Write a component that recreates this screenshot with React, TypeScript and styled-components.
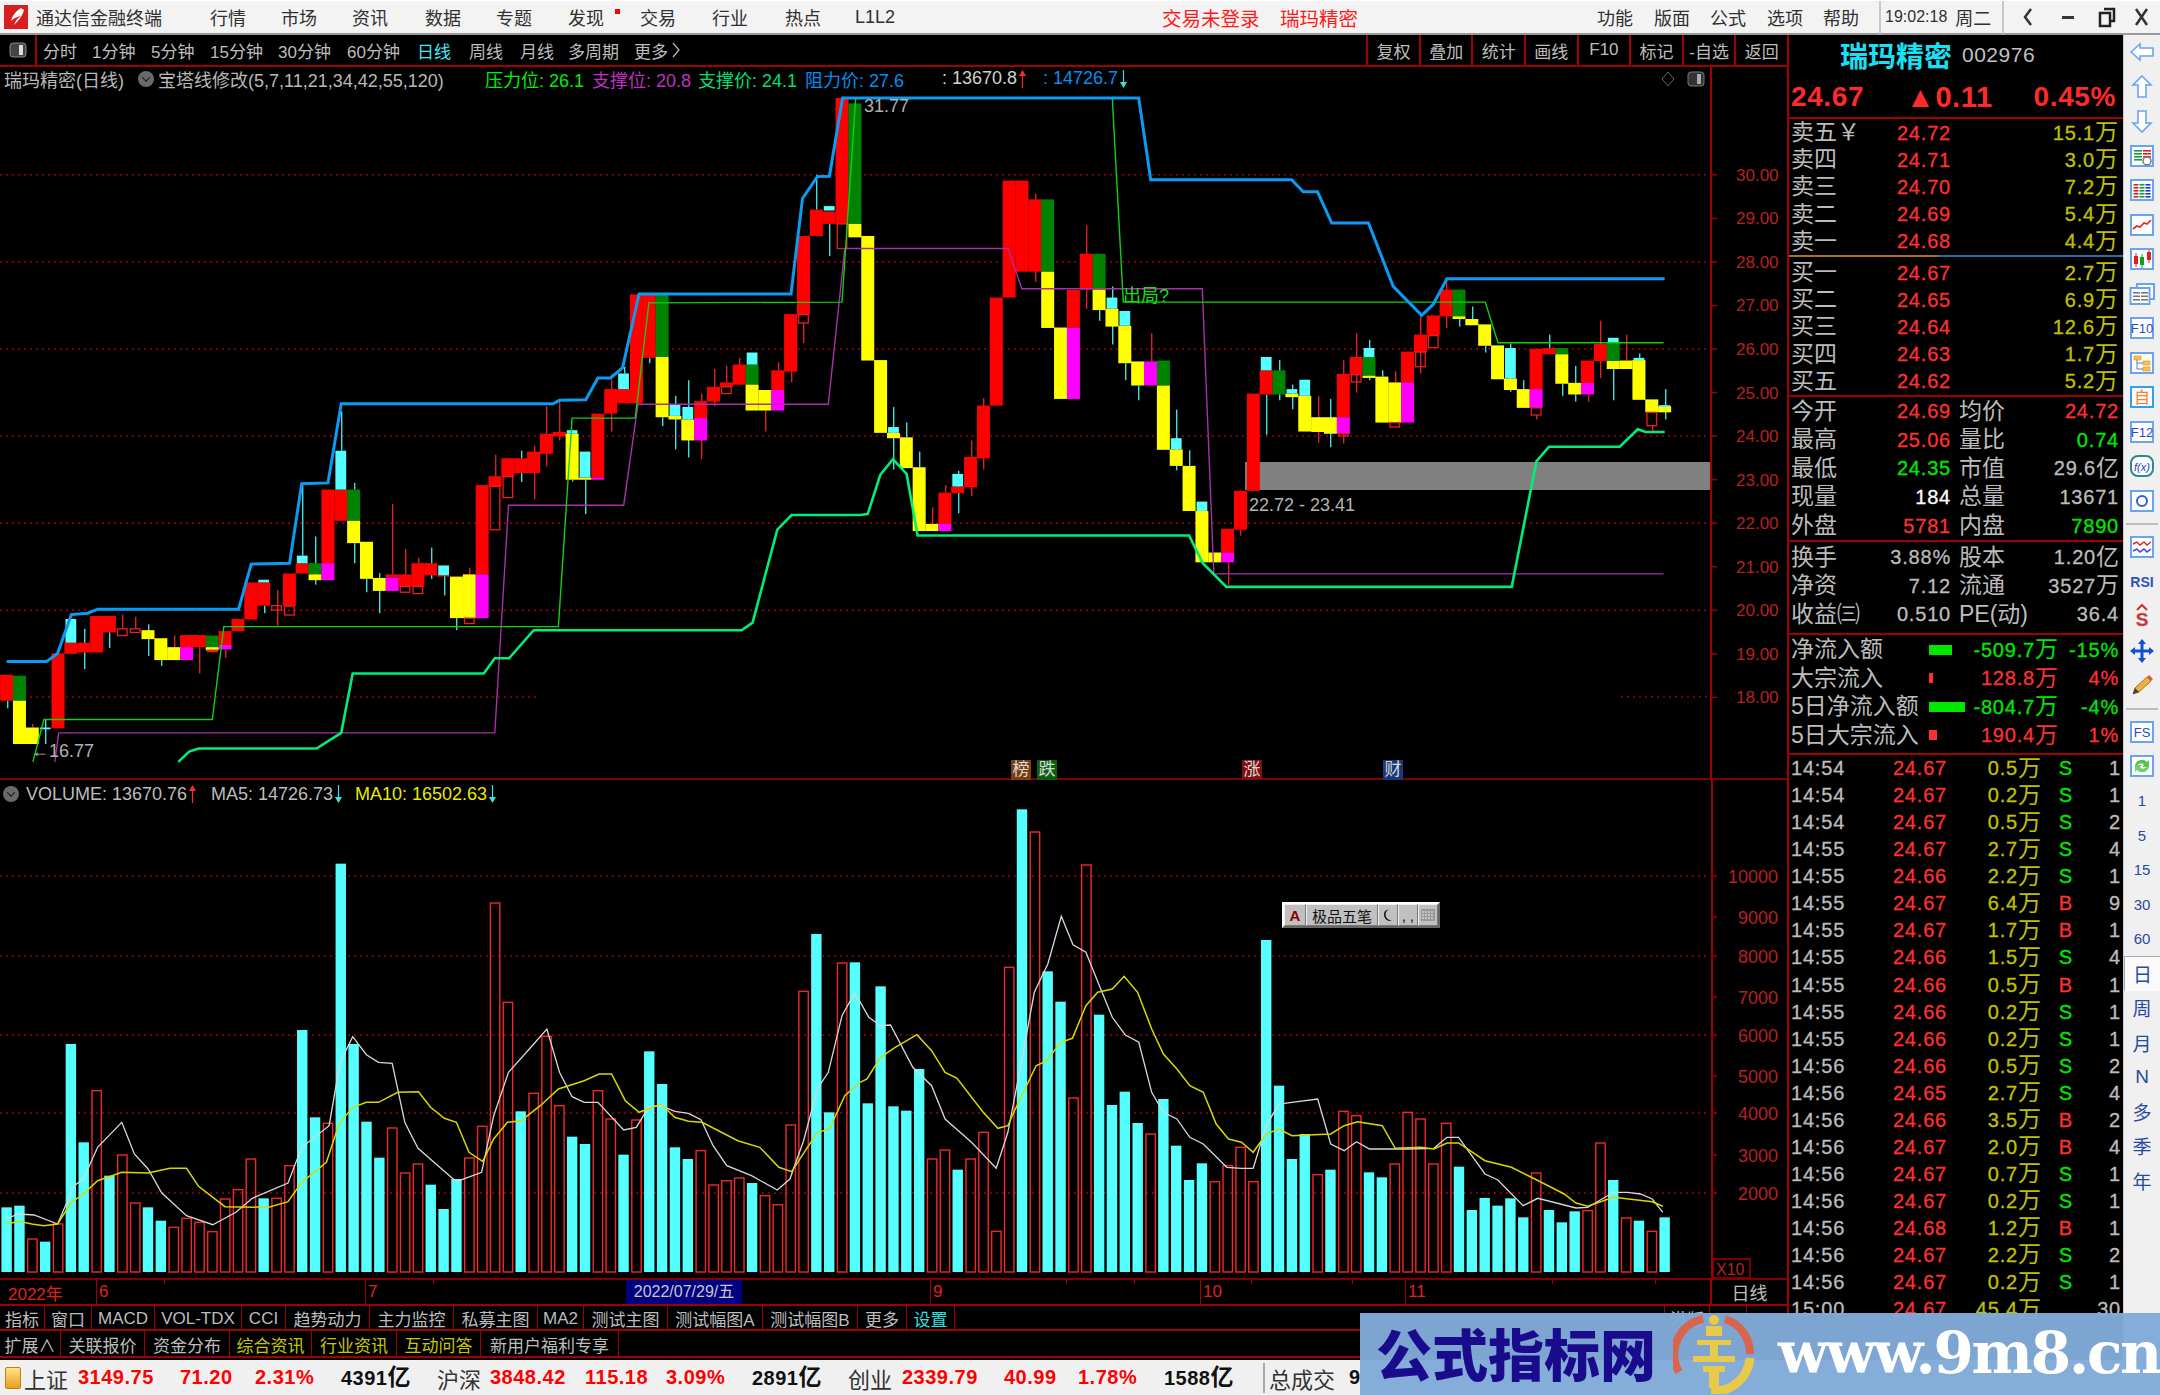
import React from "react";
import styled, { createGlobalStyle } from "styled-components";

const FONT = `"Liberation Sans","Noto Sans CJK SC",sans-serif`;
const LINE = "#a00000";

const Global = createGlobalStyle`
  html,body{margin:0;padding:0;background:#000;overflow:hidden;}
  *{box-sizing:border-box;}
  #root{width:2160px;height:1395px;}
`;

const Page = styled.div`
  width:2160px;height:1395px;position:relative;overflow:hidden;background:#000;
  font-family:${FONT};display:flex;flex-direction:column;
`;
const TitleBar = styled.div`
  height:35px;background:#f3f3f3;border-bottom:2px solid #9a9a9a;border-top:1px solid #fff;
  display:flex;align-items:center;font-size:18px;color:#303030;flex:none;
`;
const Logo = styled.svg`width:24px;height:24px;margin-left:4px;flex:none;`;
const AppName = styled.span`margin-left:8px;width:174px;white-space:nowrap;`;
const MenuItem = styled.span<{ $w: number }>`width:${(p) => p.$w}px;white-space:nowrap;position:relative;flex:none;`;
const RedDot = styled.i`position:absolute;left:47px;top:5px;width:5px;height:5px;background:#f00;`;
const Alert = styled.span<{ $w: number }>`color:#ff1a1a;width:${(p) => p.$w}px;flex:none;white-space:nowrap;font-size:19.5px;`;
const Clock = styled.span`
  border-left:2px solid #c8c8c8;border-right:2px solid #c8c8c8;height:33px;width:125px;margin-left:4px;
  display:flex;align-items:center;padding-left:4px;font-size:16px;gap:8px;white-space:nowrap;flex:none;
`;
const ClockDay = styled.span`font-size:18px;`;
const WinIcons = styled.svg`width:154px;height:30px;flex:none;`;

const Body = styled.div`display:flex;flex:none;height:1325px;`;
const ChartColumn = styled.div`width:1789px;border-right:2px solid ${LINE};display:flex;flex-direction:column;flex:none;`;
const ToolStrip = styled.div`
  height:32px;border-bottom:2px solid ${LINE};display:flex;align-items:center;color:#bdbdbd;font-size:17px;flex:none;
`;
const ToolToggle = styled.div`width:37px;height:30px;border-right:2px solid ${LINE};margin-right:6px;display:flex;align-items:center;justify-content:center;flex:none;`;
const PeriodItem = styled.span<{ $w: number; $on?: boolean }>`
  width:${(p) => p.$w}px;flex:none;white-space:nowrap;display:flex;align-items:center;gap:4px;color:${(p) => (p.$on ? "#3fe8f5" : "#bdbdbd")};
`;
const ToolRight = styled.div`margin-left:auto;display:flex;height:30px;`;
const ToolCell = styled.div`
  width:52.6px;border-left:2px solid ${LINE};display:flex;align-items:center;justify-content:center;white-space:nowrap;
`;
const InfoRow = styled.div`height:23px;display:flex;align-items:center;font-size:18px;color:#b8b8b8;flex:none;position:relative;white-space:nowrap;`;
const AxisStub = styled.i`position:absolute;left:1710px;top:0;width:2px;height:23px;background:${LINE};`;
const InfoName = styled.span`margin-left:4px;width:134px;flex:none;`;
const InfoField = styled.span<{ $w: number; $c: string }>`
  width:${(p) => p.$w}px;color:${(p) => p.$c};flex:none;display:flex;align-items:center;gap:1px;
`;
const Knob = styled.i`
  width:16px;height:16px;border-radius:50%;background:#6a6a6a;margin-right:4px;flex:none;display:flex;align-items:center;justify-content:center;
  &::after{content:"";width:5px;height:5px;border-right:1.5px solid #111;border-bottom:1.5px solid #111;transform:rotate(45deg) translate(-1px,-1px);}
`;
const HeadKnob = styled(Knob)`margin-left:3px;margin-right:7px;`;
const DiamondIcon = styled.svg`margin-left:497px;flex:none;`;
const ToggleIcon = styled.svg`margin-left:11px;flex:none;`;
const Pane = styled.div<{ $h: number }>`height:${(p) => p.$h}px;position:relative;flex:none;border-bottom:2px solid #800000;`;
const ChartSvg = styled.svg`display:block;position:absolute;left:0;top:0;`;
const PaneHead = styled.div`position:absolute;left:0;top:3px;height:22px;display:flex;align-items:center;font-size:18px;color:#bcbcbc;white-space:nowrap;`;
const HeadItem = styled.span<{ $w?: number; $c?: string }>`
  width:${(p) => (p.$w ? `${p.$w}px` : "auto")};color:${(p) => p.$c || "#bcbcbc"};display:flex;align-items:center;gap:1px;flex:none;
`;
const Marker = styled.span<{ $x: number; $bg: string }>`
  position:absolute;left:${(p) => p.$x}px;top:670px;width:20px;height:20px;background:${(p) => p.$bg};color:#d8d8d8;
  font-size:17px;line-height:20px;text-align:center;
`;
const Ime = styled.div`
  position:absolute;left:1282px;top:122px;width:158px;height:26px;background:#c0c0c0;
  border:2px solid;border-color:#fff #666 #666 #fff;display:flex;align-items:stretch;color:#111;font-size:15px;
`;
const ImeCell = styled.span<{ $w: number; $c?: string }>`
  width:${(p) => p.$w}px;border:1px solid;border-color:#eee #777 #777 #eee;display:flex;align-items:center;justify-content:center;
  color:${(p) => p.$c || "#111"};white-space:nowrap;flex:none;
`;
const DateRow = styled.div`
  height:26px;border-bottom:2px solid ${LINE};display:flex;color:#e02020;font-size:17px;flex:none;position:relative;
`;
const DateCell = styled.div<{ $w: number; $plain?: boolean }>`
  width:${(p) => p.$w}px;flex:none;border-left:${(p) => (p.$plain ? "none" : `1px solid ${LINE}`)};display:flex;align-items:center;padding-left:${(p) => (p.$plain ? 8 : 2)}px;position:relative;
`;
const DateHighlight = styled.span`
  position:absolute;left:260px;top:0;width:116px;height:24px;background:#000080;color:#c8c8c8;font-size:16px;line-height:24px;text-align:center;
`;
const Tick = styled.i<{ $x: number }>`position:absolute;left:${(p) => p.$x}px;top:0;width:1px;height:4px;background:${LINE};`;
const PeriodCell = styled.div`width:77px;flex:none;border-left:2px solid ${LINE};display:flex;align-items:center;justify-content:center;color:#bdbdbd;font-size:18px;`;
const TabRow = styled.div<{ $h: number }>`height:${(p) => p.$h}px;border-bottom:2px solid ${LINE};display:flex;flex:none;font-size:17px;color:#bdbdbd;`;
const Tab = styled.div<{ $w: number; $c?: string }>`
  width:${(p) => p.$w}px;flex:none;border-right:1px solid ${LINE};display:flex;align-items:center;justify-content:center;padding-top:2px;white-space:nowrap;color:${(p) => p.$c || "#bdbdbd"};
`;

const QuotePanel = styled.div`width:334px;flex:none;display:flex;flex-direction:column;color:#c0c0c0;font-size:23px;overflow:hidden;`;
const NameRow = styled.div`height:32px;display:flex;align-items:center;flex:none;padding:8px 0 0 51px;`;
const StockName = styled.span`color:#18e0f5;font-size:28px;font-weight:700;`;
const StockCode = styled.span`color:#c0c0c0;font-size:21px;margin-left:10px;letter-spacing:.5px;`;
const PriceRow = styled.div`
  height:52px;border-bottom:2px solid ${LINE};display:flex;align-items:center;flex:none;color:#ff2a2a;font-size:28px;font-weight:700;padding:10px 7px 0 2px;letter-spacing:.6px;
`;
const PriceChange = styled.span`margin-left:42px;width:124px;white-space:nowrap;font-size:29px;`;
const PricePct = styled.span`margin-left:auto;`;
const Section = styled.div<{ $pt?: number; $pb?: number; $line?: boolean }>`
  flex:none;padding-top:${(p) => p.$pt || 0}px;padding-bottom:${(p) => p.$pb || 0}px;
  border-bottom:${(p) => (p.$line ? `2px solid ${LINE}` : "none")};
`;
const SplitLine = styled.div`height:2px;flex:none;background:linear-gradient(90deg,#a87020 0 150px,#2a6ea8 150px);`;
const Row = styled.div<{ $h: number }>`height:${(p) => p.$h}px;display:flex;align-items:center;padding-left:2px;white-space:nowrap;`;
const Label = styled.span<{ $w: number; $ml?: number }>`
  width:${(p) => p.$w}px;margin-left:${(p) => p.$ml || 0}px;flex:none;color:#bcbcbc;line-height:1;white-space:nowrap;
`;
const Num = styled.span<{ $w: number; $c?: string; $left?: boolean }>`
  width:${(p) => p.$w}px;flex:none;display:flex;align-items:center;justify-content:${(p) => (p.$left ? "flex-start" : "flex-end")};
  color:${(p) => p.$c || "#bcbcbc"};font-size:20px;line-height:1;letter-spacing:.8px;white-space:nowrap;-webkit-text-stroke:.3px currentColor;
`;
const Unit = styled.span`font-size:23px;letter-spacing:0;-webkit-text-stroke:0;line-height:1;`;
const FlowBarBox = styled.span`width:45px;flex:none;display:flex;align-items:center;`;
const FlowBar = styled.i<{ $w: number; $c: string }>`display:block;height:10px;width:${(p) => p.$w}px;background:${(p) => p.$c};`;

const SideBar = styled.div`width:37px;flex:none;background:#f0f0f0;border-left:1px solid #cfcfcf;display:flex;flex-direction:column;align-items:center;color:#2a4aa0;`;
const SideSlot = styled.div<{ $on?: boolean }>`
  width:36px;height:34.5px;flex:none;display:flex;align-items:center;justify-content:center;font-size:19px;
  background:${(p) => (p.$on ? "#fafafa" : "transparent")};
  border-top:${(p) => (p.$on ? "1px solid #aaa" : "none")};border-left:${(p) => (p.$on ? "1px solid #aaa" : "none")};
`;
const SideNum = styled.span`font-size:15px;color:#2a4aa0;`;
const SideSep = styled.div`width:32px;height:2px;background:#bdbdbd;margin:5px 0 5px;flex:none;`;
const Ico = styled.svg`width:26px;height:26px;display:block;`;

const StatusBar = styled.div`height:35px;background:#f0f0f0;display:flex;align-items:center;flex:none;font-size:22px;color:#333;white-space:nowrap;overflow:hidden;`;
const StatusIcon = styled.i`width:16px;height:22px;margin:0 3px 0 5px;flex:none;background:linear-gradient(#ffe28a,#e8a020);border:1px solid #c08010;border-radius:2px;`;
const Stat = styled.span<{ $w: number; $c?: string; $sz?: number; $b?: boolean }>`
  width:${(p) => p.$w}px;flex:none;color:${(p) => p.$c || "#333"};font-size:${(p) => p.$sz || 22}px;font-weight:${(p) => (p.$b ? 700 : 400)};
  letter-spacing:${(p) => (p.$sz ? ".5px" : "0")};
`;
const StatSep = styled.i`width:2px;height:30px;background:#aaa;margin:0 4px 0 0;flex:none;`;

const Watermark = styled.div`
  position:absolute;right:0;bottom:0;width:800px;height:82px;background:rgba(128,170,216,.97);display:flex;align-items:center;
`;
const WmTitle = styled.span`
  margin:-4px 0 0 16px;width:303px;color:#1a0a8c;font:900 56px "Noto Sans CJK SC",sans-serif;letter-spacing:0;white-space:nowrap;line-height:1;
`;
const WmLogo = styled.svg`width:82px;height:80px;flex:none;`;
const WmUrl = styled.span`margin:-2px 0 0 23px;color:#fff;font:700 58px "DejaVu Serif",serif;white-space:nowrap;letter-spacing:-2.2px;line-height:1;`;

// ---------- chart data ---------- //
const STEP = 12.853;
const cx = (i: number) => 6.6 + STEP * i;
const py = (z: number) => 90 + z / 2.24;
const vy = (z: number) => 780 + z / 3;

const candles: string[] = [
"r1310,1368 W1368,1385","g1312,1368 y1368,1465","y1428,1465 w1420,1428","c1428,1432 W1410,1465","r1262,1430","r1238,1263 c1185,1238","r1238,1260 W1207,1297","r1178,1260","r1178,1215 W1215,1250","h1207,1222 w1175,1207",
"h1207,1215 w1180,1207","y1210,1230 W1197,1268","y1228,1277 W1277,1290","y1248,1277 w1222,1248","r1221,1248 m1248,1277","r1221,1248 w1248,1307","g1222,1248 y1248,1255 h1255,1258","r1212,1243 m1243,1253 w1253,1272","r1185,1212","r1103,1186",
"r1103,1155 c1097,1103 W1155,1172","h1155,1165 w1120,1200","r1083,1156 h1156,1176","r1060,1083 c1043,1060 W880,1043","g1060,1085 y1085,1098 W1000,1108","r895,1060 m1060,1098","r895,965 c808,895 W720,808","g895,965 y965,1015 W880,895 W1015,1060","y1012,1095 W1095,1125","y1093,1122 W1082,1172",
"r1085,1092 m1092,1122 w927,1085","r1085,1112 h1112,1125 w1028,1085","r1060,1112 h1112,1128 w1048,1060","r1060,1087 W1025,1095","c1065,1087 r1087,1090 W1087,1132","y1090,1183 W1183,1210","y1085,1183 h1183,1195 w1070,1085","r885,1085 m1085,1183","r865,888 h888,985 w817,865","r825,866 h866,913",
"r825,858 W808,878","r810,858 w797,917","r770,815 w708,843","r766,776 w697,785","y770,873 c762,770 W873,877","c810,868 y868,873 W873,950","r725,868 m868,873","r670,725 w648,765","r670,702 c635,670 W620,635","r458,702",
"r458,600 W600,612","g458,598 y598,733 W733,753","c705,730 y730,738 W685,805","y738,785 c710,738 W650,823","r697,735 m735,785 w680,827","r665,698 w625,708","r655,665 h665,680 w618,655","r615,660 w600,660","c588,615 g615,660 y660,718","y672,718 w718,765",
"r628,672 m672,718 w610,628","r502,631 w631,655","r327,503 h503,522 w522,567","r268,327 W190,268","c260,270 r272,300 W300,372","r18,300 h300,355","g30,300 y300,330","y327,606","y605,768","y768,780 c755,768 W710,850",
"y778,847 W745,778","y845,988 W810,845","y972,988 w935,972","r902,972 m972,988 w885,902","r888,903 c860,888 W853,948","r822,890 w785,910","r707,825 w690,850","r465,707","r203,465","r203,407",
"r245,407 w232,430","g245,407 y407,533","y532,692","r448,532 m532,692","r367,447 w303,490","g367,447 y447,493 W493,517","y490,530 c465,490 W440,570","y528,612 c495,528 W612,650","y608,662 W662,695","m608,662 w545,608",
"g606,662 y662,806","y805,842 c780,805 W716,852","y842,943 W807,842","y943,1058 c922,943","y1036,1058","r983,1036 m1036,1058 w1058,1108","r898,985 w985,998","r680,898","r628,682 c598,628 W682,772","g628,682 W605,695",
"y680,688 c670,680 W660,715","y685,765 c649,685","y733,766 w685,790","y733,770 W692,800","r636,733 m733,770 h770,775 w605,792","r598,638 h638,654 w545,678","g598,640 y640,645 c578,598 W560,650","y642,745 W628,642","y655,745 h745,755 w630,655","r586,655 m655,745",
"r548,587 h587,620 w505,635","r505,550 h550,577","r447,507 w425,533","g447,507 y507,513 W513,530","y513,527 W485,513","y525,573 W573,588","y572,648","y646,672 c578,646 W568,676","y670,712 W650,670","r580,670 m670,712 h712,728 w728,738",
"r578,592 W548,590","g578,592 y592,658 W658,685","y656,682 W618,698","r606,656 m656,682 w682,698","r569,607 w517,645","g566,607 y607,625 c555,566 W625,695","y606,625 w548,606","y605,694 c600,605 W590,600","y693,722 h722,752 w752,765","y708,722 c706,710 W670,738",
];

const volumes = "c1285 c1280 r1380 c1388 r1335 c795 c1090 r935 c1190 r1128 r1272 c1285 c1325 r1345 r1318 r1330 r1358 r1260 r1232 r1140 c1258 r1258 r1160 c753 c1015 r1033 c254 c795 c1028 c1136 r1047 r1182 r1155 c1217 c1290 c1200 r1137 r1042 r372 r670 c997 r943 r772 r980 c1073 c1095 r935 r1020 c1127 r1023 c817 c915 c1105 c1140 r1115 r1218 r1205 r1197 c1212 r1250 r1277 r1038 r637 c465 c1000 r552 c550 c973 c622 c982 c995 c870 r1140 r1113 c1172 r1140 r1060 r1357 r565 c91 r159 c577 c668 r957 r258 c707 c978 c938 c1032 r1065 c960 c1100 c1203 c1153 r1208 r1160 r1105 r1208 c483 c920 c1140 c1065 r1187 c1172 r997 r1010 c1180 c1195 r1155 r1000 r1020 r1155 r1033 c1163 c1293 c1257 c1280 c1258 c1315 r1182 c1293 c1330 c1297 r1295 r1092 c1203 r1317 c1325 r1357 c1315".split(" ");

type P = number[];
const Z = 1.823, Z2 = 1.704;
const toPts = (a: P, b: P, sx: number, sy: (z: number) => number, sx2: number) => {
  const out: string[] = [];
  for (let i = 0; i < a.length; i += 2) out.push(`${(a[i] / sx).toFixed(1)},${sy(a[i + 1]).toFixed(1)}`);
  for (let i = 0; i < b.length; i += 2) out.push(`${(860 + b[i] / sx2).toFixed(1)},${sy(b[i + 1]).toFixed(1)}`);
  return out.join(" ");
};
const blue = toPts([12,1280,85,1280,105,1262,130,1175,160,1172,178,1163,435,1163,458,1062,528,1060,550,882,598,880,622,703,1008,703,1020,695,1068,694,1090,645,1113,645,1135,622,1165,457,1442,457,1463,243,1490,194,1512,193,1536,18],[0,18,508,18,530,201,787,201,808,228,834,228,860,298,927,298,972,440,1024,505,1045,480,1070,423,1467,423],Z,py,Z);
const lime = toPts([60,1505,80,1410,387,1410,408,1202,1018,1202,1043,735,1158,735,1183,477,1535,475,1560,18],[0,18,460,18,480,475,1140,475,1163,566,1465,566],Z,py,Z);
const purple = toPts([100,1505,107,1440,902,1440,927,930,1137,930,1163,704,1510,704,1540,355],[270,355,295,445,624,445,645,1084,1465,1084],Z,py,Z);
const spring = toPts([325,1505,345,1482,362,1475,577,1475,622,1440,643,1307,882,1307,902,1273,928,1273,973,1210,1352,1210,1372,1193,1417,985,1443,952,1568,952],[14,950,37,862,60,827,85,860,105,998,600,998,625,1060,668,1113,1188,1113,1233,832,1256,799,1385,799,1418,760,1432,766,1467,766],Z,py,Z);
const ma5 = toPts([12,1318,35,1305,62,1308,105,1335,135,1220,152,1200,178,1105,222,1030,245,1125,270,1170,295,1242,340,1310,388,1337,430,1300,460,1258,525,1212,550,1105,600,1040,620,850,643,773,668,827,690,850,715,853,738,1030,762,1108,832,1208,878,1180,900,1010,927,880,965,810,997,750,1020,880,1043,953,1065,970,1090,970,1137,1053,1160,1045,1183,983,1205,980,1230,997,1255,1003,1278,1022,1300,1100,1325,1160,1370,1190,1417,1233,1440,1200,1465,1085,1490,930,1510,880,1535,710,1557,645],[0,668,15,715,35,740,52,738,90,865,122,920,145,1020,190,1090,232,1168,252,1060,275,850,297,640,320,555,343,412,363,497,385,520,408,620,430,715,452,768,475,790,497,940,517,1000,540,1020,562,1075,585,1095,625,1165,650,1168,670,1168,692,1040,714,975,736,970,780,960,802,1095,825,1115,846,1088,868,1110,935,1110,978,1108,1000,1075,1020,1075,1065,1185,1087,1203,1130,1280,1155,1258,1220,1287,1240,1285,1284,1240,1308,1240,1330,1245,1350,1260,1368,1300],Z,vy,Z2);
const ma10 = toPts([12,1335,35,1327,58,1335,80,1340,105,1335,130,1270,152,1245,178,1205,222,1180,270,1182,310,1168,340,1168,362,1222,410,1283,490,1285,525,1268,550,1210,595,1150,618,1035,643,985,668,970,690,970,725,940,763,938,785,985,810,1018,832,1030,855,1120,880,1147,900,1080,925,1030,950,1025,985,980,1018,930,1065,905,1092,885,1115,885,1140,965,1165,1000,1205,975,1230,1015,1255,1027,1280,1030,1345,1085,1385,1105,1420,1165,1443,1178,1490,1060,1512,1050,1540,950,1568,910],[12,900,35,835,60,805,97,767,122,815,145,880,165,897,210,1000,235,1048,252,1040,262,1000,300,860,318,845,342,790,362,778,385,680,405,640,430,630,450,592,473,640,497,750,517,825,540,870,562,920,585,940,607,1035,628,1080,650,1090,670,1120,692,1065,714,1050,736,1070,802,1065,825,1040,848,1028,890,1040,912,1108,956,1105,978,1110,1000,1092,1020,1092,1065,1145,1110,1165,1150,1200,1200,1245,1220,1272,1240,1282,1284,1255,1350,1268,1368,1282],Z,vy,Z2);

const SOLID: Record<string, string> = { r: "#ff0000", g: "#008400", y: "#ffff00", m: "#ff00ff" };
const GRID = { stroke: "#a80000", strokeWidth: 1.5, strokeDasharray: "2 4" };

const Candles = () => {
  const wicks: React.ReactNode[] = [], solids: React.ReactNode[] = [], tops: React.ReactNode[] = [];
  candles.forEach((s, i) => {
    const x = cx(i);
    s.split(" ").forEach((t, k) => {
      const kind = t[0];
      const [a, b] = t.slice(1).split(",").map(Number);
      const y1 = py(a), y2 = py(b);
      const key = `${i}-${k}`;
      if (kind === "w" || kind === "W")
        wicks.push(<rect key={key} x={Math.round(x)} y={y1} width={1.4} height={y2 - y1} fill={kind === "w" ? "#e02020" : "#40e0e0"} />);
      else if (kind === "c") tops.push(<rect key={key} x={x - 5.4} y={y1} width={10.8} height={y2 - y1} fill="#55ffff" />);
      else if (kind === "h") tops.push(<rect key={key} x={x - 4.8} y={y1} width={9.6} height={y2 - y1} fill="none" stroke="#e82020" strokeWidth={1.3} />);
      else solids.push(<rect key={key} x={x - 6.5} y={y1} width={13} height={y2 - y1} fill={SOLID[kind]} />);
    });
  });
  return <g>{wicks}{solids}{tops}</g>;
};

const Volumes = () => (
  <g>
    {volumes.map((v, i) => {
      const x = cx(i), top = vy(Number(v.slice(1))), base = 1273;
      return v[0] === "c" ? (
        <rect key={i} x={x - 5.2} y={top} width={10.4} height={base - top} fill="#55ffff" />
      ) : (
        <rect key={i} x={x - 4.6} y={top} width={9.4} height={base - top} fill="none" stroke="#f02828" strokeWidth={1.4} />
      );
    })}
  </g>
);

const priceLabels = [30, 29, 28, 27, 26, 25, 24, 23, 22, 21, 20, 19, 18];
const priceGrid = [30, 28, 26, 24, 22, 20];
const Y = (p: number) => 174.8 + (30 - p) * 43.55;
const volLabels: [string, number][] = [["10000", 877], ["9000", 918], ["8000", 957], ["7000", 998], ["6000", 1036], ["5000", 1077], ["4000", 1114], ["3000", 1156], ["2000", 1194]];
const volGrid = [877, 957, 1036, 1114, 1194];

const MainChart = () => (
  <ChartSvg width={1787} height={688} viewBox="0 90 1787 688">
    {priceGrid.map((p) => <line key={p} x1={0} x2={1710} y1={Y(p)} y2={Y(p)} {...GRID} />)}
    <line x1={0} x2={537} y1={697} y2={697} {...GRID} />
    <line x1={1621} x2={1710} y1={697} y2={697} {...GRID} />
    <rect x={1245} y={462} width={465} height={28} fill="#808080" />
    <Candles />
    <polyline points={purple} fill="none" stroke="#a830a8" strokeWidth={1.4} />
    <polyline points={lime} fill="none" stroke="#10d010" strokeWidth={1.4} />
    <polyline points={spring} fill="none" stroke="#00ee78" strokeWidth={2.6} />
    <polyline points={blue} fill="none" stroke="#0a9cf5" strokeWidth={3} />
    <line x1={1711} x2={1711} y1={90} y2={778} stroke={LINE} strokeWidth={2} />
    {priceLabels.map((p) => (
      <g key={p}>
        <line x1={1711} x2={1717} y1={Y(p)} y2={Y(p)} stroke={LINE} strokeWidth={1.5} />
        <text x={1736} y={Y(p) + 6} fill="#b82020" fontSize={17} fontFamily={FONT}>{p.toFixed(2)}</text>
      </g>
    ))}
    <text x={864} y={112} fill="#b0b0b0" fontSize={18} fontFamily={FONT}>31.77</text>
    <text x={31} y={757} fill="#b0b0b0" fontSize={18} fontFamily={FONT}>←16.77</text>
    <text x={1249} y={511} fill="#b4b4b4" fontSize={18} fontFamily={FONT}>22.72 - 23.41</text>
    <text x={1123} y={302} fill="#10e010" fontSize={18} fontFamily={FONT}>出局?</text>
  </ChartSvg>
);

const VolumeChart = () => (
  <ChartSvg width={1787} height={498} viewBox="0 781 1787 498">
    {volGrid.map((y) => <line key={y} x1={0} x2={1710} y1={y} y2={y} {...GRID} />)}
    <Volumes />
    <polyline points={ma5} fill="none" stroke="#d8d8d8" strokeWidth={1.3} />
    <polyline points={ma10} fill="none" stroke="#d8d800" strokeWidth={1.5} />
    <line x1={1712} x2={1712} y1={781} y2={1279} stroke={LINE} strokeWidth={2} />
    {volLabels.map(([t, y]) => (
      <g key={t}>
        <line x1={1712} x2={1717} y1={y} y2={y} stroke={LINE} strokeWidth={1.5} />
        <text x={1778} y={y + 7} textAnchor="end" fill="#b82020" fontSize={18} fontFamily={FONT}>{t}</text>
      </g>
    ))}
    <rect x={1713} y={1260} width={37} height={19} fill="none" stroke={LINE} strokeWidth={1.5} />
    <text x={1716} y={1276} fill="#b82020" fontSize={16} fontFamily={FONT}>X10</text>
  </ChartSvg>
);

const TrendArrow = ({ c, down }: { c: string; down?: boolean }) => (
  <svg width="9" height="20" viewBox="0 0 9 20" style={{ flex: "none" }}>
    {down ? <path d="M4.5 1v13" stroke={c} strokeWidth="1.2" /> : <path d="M4.5 6v13" stroke={c} strokeWidth="1.2" />}
    {down ? <path d="M1 13h7l-3.5 6z" fill={c} /> : <path d="M1 7h7L4.5 1z" fill={c} />}
  </svg>
);

// ---------- right quote panel ---------- //
const asks = [["卖五￥", "24.72", "15.1"], ["卖四", "24.71", "3.0"], ["卖三", "24.70", "7.2"], ["卖二", "24.69", "5.4"], ["卖一", "24.68", "4.4"]];
const bids = [["买一", "24.67", "2.7"], ["买二", "24.65", "6.9"], ["买三", "24.64", "12.6"], ["买四", "24.63", "1.7"], ["买五", "24.62", "5.2"]];
const RED = "#ff3030", GRN = "#00e800", YEL = "#c0c000", GRY = "#bcbcbc";
const stats: [string, string, string, string, string, string][] = [
  ["今开", "24.69", RED, "均价", "24.72", RED], ["最高", "25.06", RED, "量比", "0.74", GRN], ["最低", "24.35", GRN, "市值", "29.6亿", GRY],
  ["现量", "184", "#fff", "总量", "13671", GRY], ["外盘", "5781", RED, "内盘", "7890", GRN],
];
const stats2: [string, string, string, string, string, string][] = [
  ["换手", "3.88%", GRY, "股本", "1.20亿", GRY], ["净资", "7.12", GRY, "流通", "3527万", GRY], ["收益㈢", "0.510", GRY, "PE(动)", "36.4", GRY],
];
const flows: [string, number, string, string, string][] = [
  ["净流入额", 23, GRN, "-509.7", "-15%"], ["大宗流入", 4, RED, "128.8", "4%"], ["5日净流入额", 36, GRN, "-804.7", "-4%"], ["5日大宗流入", 8, RED, "190.4", "1%"],
];
const ticks: [string, string, string, string, string][] = [
  ["14:54","24.67","0.5","S","1"],["14:54","24.67","0.2","S","1"],["14:54","24.67","0.5","S","2"],["14:55","24.67","2.7","S","4"],["14:55","24.66","2.2","S","1"],["14:55","24.67","6.4","B","9"],["14:55","24.67","1.7","B","1"],["14:55","24.66","1.5","S","4"],["14:55","24.66","0.5","B","1"],["14:55","24.66","0.2","S","1"],["14:55","24.66","0.2","S","1"],["14:56","24.66","0.5","S","2"],["14:56","24.65","2.7","S","4"],["14:56","24.66","3.5","B","2"],["14:56","24.67","2.0","B","4"],["14:56","24.67","0.7","S","1"],["14:56","24.67","0.2","S","1"],["14:56","24.68","1.2","B","1"],["14:56","24.67","2.2","S","2"],["14:56","24.67","0.2","S","1"],["15:00","24.67","45.4","","30"],
];

const withUnit = (v: string) => {
  const m = v.match(/^(.*?)([万亿])$/);
  return m ? <>{m[1]}<Unit>{m[2]}</Unit></> : v;
};

// ---------- sidebar icons ---------- //
const F = { fill: "#fff", stroke: "#6aa4f0", strokeWidth: 2 };
const Frame = ({ children }: { children?: React.ReactNode }) => (
  <Ico viewBox="0 0 26 26"><rect x="2" y="3" width="22" height="20" {...F} />{children}</Ico>
);
const FText = ({ t, c = "#2a4ac0" }: { t: string; c?: string }) => (
  <Frame><text x="13" y="18" textAnchor="middle" fontSize="13" fontFamily={FONT} fill={c}>{t}</text></Frame>
);
const lines = (cols: string[], xs: number[], w: number, ys: number[]) =>
  xs.map((x, i) => ys.map((y) => <rect key={`${i}-${y}`} x={x} y={y} width={w} height={1.6} fill={cols[i]} />));

const sideIcons: React.ReactNode[] = [
  <Ico viewBox="0 0 26 26"><path d="M2 13 11 5v4h13v8H11v4z" fill="#fff" stroke="#6aa4f0" strokeWidth="1.6" /></Ico>,
  <Ico viewBox="0 0 26 26"><path d="M13 2 22 11h-5v12H9V11H4z" fill="#fff" stroke="#6aa4f0" strokeWidth="1.6" /></Ico>,
  <Ico viewBox="0 0 26 26"><path d="M13 24 4 15h5V3h8v12h5z" fill="#fff" stroke="#6aa4f0" strokeWidth="1.6" /></Ico>,
  <Frame>{lines(["#10a040", "#e02020"], [5, 14], 8, [7, 10, 13, 16])}<circle cx="18" cy="18" r="4" fill="#fff" stroke="#777" strokeWidth="1.5" /></Frame>,
  <Frame>{lines(["#e02020", "#10a040", "#2030e0"], [4.5, 10.5, 16.5], 5, [7, 10, 13, 16, 19])}</Frame>,
  <Frame><polyline points="4,17 8,14 11,15 15,11 18,12 22,8" fill="none" stroke="#e82020" strokeWidth="1.6" /></Frame>,
  <Frame><rect x="5" y="10" width="4" height="8" fill="#e02020" /><rect x="6.5" y="7" width="1" height="14" fill="#e02020" /><rect x="11" y="11" width="4" height="8" fill="#10a020" /><rect x="12.5" y="8" width="1" height="14" fill="#10a020" /><rect x="18" y="6" width="4" height="8" fill="#e02020" /><rect x="19.5" y="4" width="1" height="13" fill="#e02020" /></Frame>,
  <Ico viewBox="0 0 26 26"><rect x="8" y="3" width="17" height="15" {...F} /><rect x="1.5" y="7" width="19" height="16" {...F} />{lines(["#777", "#777"], [4, 12], 7, [11, 14.5, 18])}</Ico>,
  <FText t="F10" />,
  <Frame><rect x="5" y="6" width="7" height="4" fill="#ffc040" stroke="#d09020" strokeWidth=".6" /><rect x="14" y="11" width="7" height="4" fill="#ffc040" stroke="#d09020" strokeWidth=".6" /><rect x="14" y="17" width="7" height="4" fill="#ffc040" stroke="#d09020" strokeWidth=".6" /><path d="M8 10v9h6M8 13h6" fill="none" stroke="#4a80d0" strokeWidth="1" /></Frame>,
  <Ico viewBox="0 0 26 26"><rect x="2" y="3" width="22" height="20" fill="#fff" stroke="#30a0f0" strokeWidth="2" /><text x="13" y="19" textAnchor="middle" fontSize="16" fontFamily={FONT} fill="#ff7a30">自</text></Ico>,
  <FText t="F12" />,
  <Ico viewBox="0 0 26 26"><rect x="2" y="3" width="22" height="20" rx="7" fill="#fff" stroke="#2a8a90" strokeWidth="2" /><text x="13" y="18" textAnchor="middle" fontSize="11" fontStyle="italic" fontFamily={FONT} fill="#2040c0">f(x)</text></Ico>,
  <Frame><circle cx="13" cy="13" r="5" fill="none" stroke="#3060d0" strokeWidth="2" /></Frame>,
  "sep",
  <Frame><polyline points="4,10 8,8 11,11 15,8 18,11 22,8" fill="none" stroke="#e82020" strokeWidth="1.4" /><polyline points="4,17 8,15 11,18 15,15 18,18 22,15" fill="none" stroke="#3040e0" strokeWidth="1.4" /></Frame>,
  <Ico viewBox="0 0 26 26"><text x="13" y="18" textAnchor="middle" fontSize="14" fontWeight="700" fontFamily={FONT} fill="#3050c0">RSI</text></Ico>,
  <Ico viewBox="0 0 26 26"><path d="M8 7 13 2l5 5" fill="none" stroke="#d03030" strokeWidth="2" /><text x="13" y="23" textAnchor="middle" fontSize="19" fontWeight="700" fontFamily={FONT} fill="#d82828" stroke="#999" strokeWidth=".4">S</text></Ico>,
  <Ico viewBox="0 0 26 26"><g fill="#1050d0"><path d="M13 1l4 5h-8zM13 25l-4-5h8zM1 13l5-4v8zM25 13l-5 4V9z" /><rect x="11.5" y="6" width="3" height="14" /><rect x="6" y="11.5" width="14" height="3" /></g></Ico>,
  <Ico viewBox="0 0 26 26"><path d="M4 22l2-6L18 5l4 4L10 20z" fill="#f0b040" stroke="#a87020" strokeWidth="1" /><path d="M18 5l4 4 2-2-4-4z" fill="#d06040" /><path d="M4 22l2-6 4 4z" fill="#444" /></Ico>,
  "sep",
  <FText t="FS" />,
  <Frame><path d="M6 12a7 7 0 0 1 12-3l2-2v7h-7l2-2a4 4 0 0 0-7 1z" fill="#50c850" /><path d="M20 14a7 7 0 0 1-12 3l-2 2v-7h7l-2 2a4 4 0 0 0 7-1z" fill="#70d070" /></Frame>,
];
const sideNums = ["1", "5", "15", "30", "60"];
const sideCjk = ["日", "周", "月", "N", "多", "季", "年"];

const App = () => (
  <Page>
    <Global />
    <TitleBar>
      <Logo viewBox="0 0 24 24">
        <rect width="24" height="24" fill="#d81e1e" />
        <path d="M17 3c-5 3-9 8-10 13 3-3 6-4 10-5-3 2-6 5-7 9 4-4 8-8 10-15z" fill="#fff" />
      </Logo>
      <AppName>通达信金融终端</AppName>
      <MenuItem $w={71}>行情</MenuItem>
      <MenuItem $w={71}>市场</MenuItem>
      <MenuItem $w={73}>资讯</MenuItem>
      <MenuItem $w={71}>数据</MenuItem>
      <MenuItem $w={72}>专题</MenuItem>
      <MenuItem $w={72}>发现<RedDot /></MenuItem>
      <MenuItem $w={72}>交易</MenuItem>
      <MenuItem $w={73}>行业</MenuItem>
      <MenuItem $w={70}>热点</MenuItem>
      <MenuItem $w={307}>L1L2</MenuItem>
      <Alert $w={118}>交易未登录</Alert>
      <Alert $w={317}>瑞玛精密</Alert>
      <MenuItem $w={57}>功能</MenuItem>
      <MenuItem $w={56}>版面</MenuItem>
      <MenuItem $w={57}>公式</MenuItem>
      <MenuItem $w={56}>选项</MenuItem>
      <MenuItem $w={52}>帮助</MenuItem>
      <Clock><span>19:02:18</span><ClockDay>周二</ClockDay></Clock>
      <WinIcons viewBox="0 0 154 30">
        <path d="M27 7 21 15l6 8" fill="none" stroke="#333" strokeWidth="2.5" />
        <rect x="58" y="14" width="12" height="3" fill="#333" />
        <path d="M96 11h10v13H96z M100 7h10v12h-4" fill="none" stroke="#222" strokeWidth="2.5" />
        <path d="M132 7 143 23M143 7 132 23" stroke="#333" strokeWidth="2.5" />
      </WinIcons>
    </TitleBar>
    <Body>
      <ChartColumn>
        <ToolStrip>
          <ToolToggle>
            <svg width="18" height="18" viewBox="0 0 18 18"><rect x="1" y="2" width="16" height="14" rx="3" fill="#444" stroke="#888" /><rect x="10" y="4" width="4" height="10" fill="#ddd" /></svg>
          </ToolToggle>
          <PeriodItem $w={49}>分时</PeriodItem>
          <PeriodItem $w={59}>1分钟</PeriodItem>
          <PeriodItem $w={59}>5分钟</PeriodItem>
          <PeriodItem $w={68}>15分钟</PeriodItem>
          <PeriodItem $w={69}>30分钟</PeriodItem>
          <PeriodItem $w={70}>60分钟</PeriodItem>
          <PeriodItem $w={52} $on>日线</PeriodItem>
          <PeriodItem $w={51}>周线</PeriodItem>
          <PeriodItem $w={48}>月线</PeriodItem>
          <PeriodItem $w={66}>多周期</PeriodItem>
          <PeriodItem $w={60}>更多
            <svg width="8" height="16" viewBox="0 0 8 16"><path d="M1 1l6 7-6 7" fill="none" stroke="#bdbdbd" strokeWidth="1.2" /></svg>
          </PeriodItem>
          <ToolRight>
            {["复权", "叠加", "统计", "画线", "F10", "标记", "-自选", "返回"].map((t) => <ToolCell key={t}>{t}</ToolCell>)}
          </ToolRight>
        </ToolStrip>
        <InfoRow>
          <InfoName>瑞玛精密(日线)</InfoName>
          <Knob />
          <InfoField $w={327} $c="#b8b8b8">宝塔线修改(5,7,11,21,34,42,55,120)</InfoField>
          <InfoField $w={107} $c="#00f000">压力位: 26.1</InfoField>
          <InfoField $w={106} $c="#c030c0">支撑位: 20.8</InfoField>
          <InfoField $w={107} $c="#00e070">支撑价: 24.1</InfoField>
          <InfoField $w={137} $c="#0090f0">阻力价: 27.6</InfoField>
          <InfoField $w={101} $c="#d0d0d0">: 13670.8<TrendArrow c="#f03030" /></InfoField>
          <InfoField $w={120} $c="#0090f0">: 14726.7<TrendArrow c="#40e0e0" down /></InfoField>
          <DiamondIcon width="16" height="16" viewBox="0 0 16 16"><path d="M8 1l6 7-6 7-6-7z" fill="none" stroke="#666" /></DiamondIcon>
          <ToggleIcon width="18" height="18" viewBox="0 0 18 18"><rect x="1" y="2" width="16" height="14" rx="3" fill="#333" stroke="#777" /><rect x="10" y="4" width="4" height="10" fill="#aaa" /></ToggleIcon>
          <AxisStub />
        </InfoRow>
        <Pane $h={690}>
          <MainChart />
          <Marker $x={1011} $bg="#7a4010">榜</Marker>
          <Marker $x={1037} $bg="#0a6010">跌</Marker>
          <Marker $x={1242} $bg="#801010">涨</Marker>
          <Marker $x={1383} $bg="#183a78">财</Marker>
        </Pane>
        <Pane $h={500}>
          <VolumeChart />
          <PaneHead>
            <HeadKnob />
            <HeadItem $w={185}>VOLUME: 13670.76<TrendArrow c="#f03030" /></HeadItem>
            <HeadItem $w={144}>MA5: 14726.73<TrendArrow c="#40e0e0" down /></HeadItem>
            <HeadItem $c="#e8e800">MA10: 16502.63<TrendArrow c="#40e0e0" down /></HeadItem>
          </PaneHead>
          <Ime>
            <ImeCell $w={22} $c="#900000"><b>A</b></ImeCell>
            <ImeCell $w={72}>极品五笔</ImeCell>
            <ImeCell $w={20}>
              <svg width="10" height="14" viewBox="0 0 10 14"><path d="M6 1c-5 3-5 10 3 12C3 14-1 8 2 3z" fill="#111" /></svg>
            </ImeCell>
            <ImeCell $w={20}>‚ ,</ImeCell>
            <ImeCell $w={20}>
              <svg width="14" height="12" viewBox="0 0 14 12"><rect width="14" height="12" fill="#999" /><path d="M1 3h12M1 6h12M1 9h12" stroke="#eee" strokeDasharray="2 1" /></svg>
            </ImeCell>
          </Ime>
        </Pane>
        <DateRow>
          <DateCell $w={96} $plain>2022年</DateCell>
          <DateCell $w={269}>6<Tick $x={67} /></DateCell>
          <DateCell $w={565}>7<Tick $x={67} /><DateHighlight>2022/07/29/五</DateHighlight></DateCell>
          <DateCell $w={270}>9<Tick $x={135} /><Tick $x={203} /></DateCell>
          <DateCell $w={205}>10<Tick $x={50} /><Tick $x={151} /></DateCell>
          <DateCell $w={305}>11<Tick $x={146} /><Tick $x={249} /></DateCell>
          <PeriodCell>日线</PeriodCell>
        </DateRow>
        <TabRow $h={25}>
          {([["指标",45],["窗口",47],["MACD",63],["VOL-TDX",87],["CCI",44],["趋势动力",84],["主力监控",84],["私募主图",84],["MA2",46],["测试主图",84],["测试幅图A",95],["测试幅图B",95],["更多",49]] as [string, number][]).map(([t, w]) => <Tab key={t} $w={w}>{t}</Tab>)}
          <Tab $w={48} $c="#30e0e0">设置</Tab>
          <Tab $w={710}>{""}</Tab>
          <Tab $w={45}>港版</Tab>
          <Tab $w={37}>{""}</Tab>
        </TabRow>
        <TabRow $h={27}>
          <Tab $w={61}>扩展∧</Tab>
          <Tab $w={84}>关联报价</Tab>
          <Tab $w={85}>资金分布</Tab>
          <Tab $w={82} $c="#c8c800">综合资讯</Tab>
          <Tab $w={85} $c="#c8c800">行业资讯</Tab>
          <Tab $w={84} $c="#c8c800">互动问答</Tab>
          <Tab $w={138}>新用户福利专享</Tab>
        </TabRow>
      </ChartColumn>
      <QuotePanel>
        <NameRow><StockName>瑞玛精密</StockName><StockCode>002976</StockCode></NameRow>
        <PriceRow>
          <span>24.67</span>
          <PriceChange>▲0.11</PriceChange>
          <PricePct>0.45%</PricePct>
        </PriceRow>
        <Section>
          {asks.map(([l, p, q]) => (
            <Row key={l} $h={27.2}>
              <Label $w={90}>{l}</Label><Num $w={70} $c={RED}>{p}</Num><Num $w={167} $c={YEL}>{q}<Unit>万</Unit></Num>
            </Row>
          ))}
        </Section>
        <SplitLine />
        <Section $pt={2} $line>
          {bids.map(([l, p, q]) => (
            <Row key={l} $h={27.2}>
              <Label $w={90}>{l}</Label><Num $w={70} $c={RED}>{p}</Num><Num $w={167} $c={YEL}>{q}<Unit>万</Unit></Num>
            </Row>
          ))}
        </Section>
        <Section $line>
          {stats.map(([a, v, c, b, w, d]) => (
            <Row key={a} $h={28.6}>
              <Label $w={90}>{a}</Label><Num $w={70} $c={c}>{v}</Num>
              <Label $w={48} $ml={8}>{b}</Label><Num $w={112} $c={d}>{withUnit(w)}</Num>
            </Row>
          ))}
        </Section>
        <Section $line $pt={1} $pb={4}>
          {stats2.map(([a, v, c, b, w, d]) => (
            <Row key={a} $h={28.6}>
              <Label $w={90}>{a}</Label><Num $w={70} $c={c}>{v}</Num>
              <Label $w={72} $ml={8}>{b}</Label><Num $w={88} $c={d}>{withUnit(w)}</Num>
            </Row>
          ))}
        </Section>
        <Section $line $pt={1} $pb={3}>
          {flows.map(([l, w, c, v, pct]) => (
            <Row key={l} $h={28.5}>
              <Label $w={138}>{l}</Label>
              <FlowBarBox><FlowBar $w={w} $c={c} /></FlowBarBox>
              <Num $w={84} $c={c}>{v}<Unit>万</Unit></Num>
              <Num $w={61} $c={c}>{pct}</Num>
            </Row>
          ))}
        </Section>
        <Section>
          {ticks.map(([t, p, q, s, n], i) => (
            <Row key={i} $h={27.05}>
              <Num $w={54} $left>{t}</Num>
              <Num $w={102} $c={RED}>{p}</Num>
              <Num $w={94} $c={YEL}>{q}<Unit>万</Unit></Num>
              <Num $w={32} $c={s === "S" ? GRN : RED}>{s}</Num>
              <Num $w={48}>{n}</Num>
            </Row>
          ))}
        </Section>
      </QuotePanel>
      <SideBar>
        {sideIcons.map((ic, i) => ic === "sep" ? <SideSep key={i} /> : <SideSlot key={i}>{ic}</SideSlot>)}
        {sideNums.map((n) => <SideSlot key={n}><SideNum>{n}</SideNum></SideSlot>)}
        {sideCjk.map((n, i) => <SideSlot key={n} $on={i === 0}>{n}</SideSlot>)}
      </SideBar>
    </Body>
    <StatusBar>
      <StatusIcon />
      <Stat $w={54}>上证</Stat>
      <Stat $w={102} $c="#f00" $sz={20} $b>3149.75</Stat>
      <Stat $w={75} $c="#f00" $sz={20} $b>71.20</Stat>
      <Stat $w={86} $c="#f00" $sz={20} $b>2.31%</Stat>
      <Stat $w={96} $c="#111" $sz={20} $b>4391<Unit>亿</Unit></Stat>
      <Stat $w={53}>沪深</Stat>
      <Stat $w={95} $c="#f00" $sz={20} $b>3848.42</Stat>
      <Stat $w={81} $c="#f00" $sz={20} $b>115.18</Stat>
      <Stat $w={86} $c="#f00" $sz={20} $b>3.09%</Stat>
      <Stat $w={96} $c="#111" $sz={20} $b>2891<Unit>亿</Unit></Stat>
      <Stat $w={54}>创业</Stat>
      <Stat $w={102} $c="#f00" $sz={20} $b>2339.79</Stat>
      <Stat $w={74} $c="#f00" $sz={20} $b>40.99</Stat>
      <Stat $w={86} $c="#f00" $sz={20} $b>1.78%</Stat>
      <Stat $w={99} $c="#111" $sz={20} $b>1588<Unit>亿</Unit></Stat>
      <StatSep />
      <Stat $w={80}>总成交</Stat>
      <Stat $w={100} $c="#111" $sz={20} $b>9</Stat>
    </StatusBar>
    <Watermark>
      <WmTitle>公式指标网</WmTitle>
      <WmLogo viewBox="0 0 82 80">
        <path d="M6 58A36 36 0 0 1 30 5" fill="none" stroke="#d9654f" strokeWidth="8" />
        <path d="M52 5A36 36 0 0 1 77 40" fill="none" stroke="#d9654f" strokeWidth="8" />
        <path d="M77 44A36 36 0 0 1 38 77" fill="none" stroke="#e8c94a" strokeWidth="9" />
        <circle cx="41" cy="6" r="5" fill="#e8c94a" />
        <path d="M33 12h16v10H33zM24 26h34v5H24zM37 31h8v12h-8zM20 42h42v6H20zM30 52h22v6H30zM36 58h10v16H36z" fill="#e8c94a" />
      </WmLogo>
      <WmUrl>www.9m8.cn</WmUrl>
    </Watermark>
  </Page>
);

export default App;
